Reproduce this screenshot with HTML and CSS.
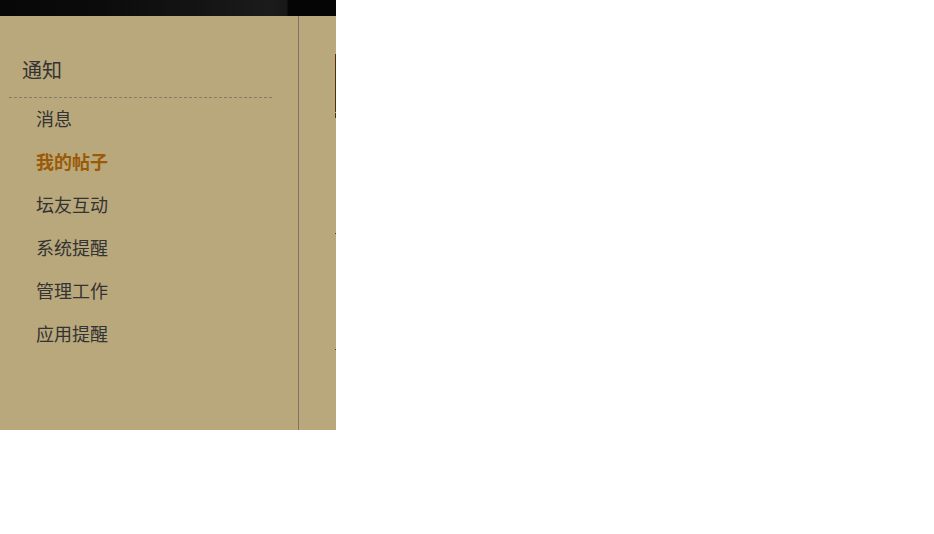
FILE: index.html
```html
<!DOCTYPE html>
<html lang="zh-CN">
<head>
<meta charset="utf-8">
<title>通知</title>
<link rel="stylesheet" href="styles.css">
</head>
<body>
<div class="page">
  <div class="topbar"></div>
  <div class="wrap">
    <aside class="sidebar">
      <h2 class="side-title">通知</h2>
      <ul class="side-menu">
        <li><a href="#">消息</a></li>
        <li class="active"><a href="#">我的帖子</a></li>
        <li><a href="#">坛友互动</a></li>
        <li><a href="#">系统提醒</a></li>
        <li><a href="#">管理工作</a></li>
        <li><a href="#">应用提醒</a></li>
      </ul>
    </aside>
    <main class="main">
      <div class="edge edge-a"></div>
      <div class="edge edge-b"></div>
      <div class="edge edge-dot edge-c"></div>
      <div class="edge edge-dot edge-d"></div>
    </main>
  </div>
</div>
</body>
</html>
```
FILE: styles.css
```css
html, body {
  margin: 0;
  padding: 0;
  background: #ffffff;
}
.page {
  width: 336px;
  font-family: "Noto Sans CJK SC", "Noto Sans", sans-serif;
}
.topbar {
  height: 16px;
  background: linear-gradient(90deg, #070707 0px, #0b0b0b 100px, #141414 200px, #1b1b1b 270px, #181818 287px, #050505 288px, #050505 336px);
}
.wrap {
  display: flex;
  height: 414px;
  background: #b9a87c;
}
.sidebar {
  width: 298px;
  border-right: 1px solid #7e7562;
  box-sizing: content-box;
}
.side-title {
  margin: 44px 0 0 9px;
  width: 250px;
  padding: 0 0 17px 13px;
  font-size: 20px;
  line-height: 20px;
  font-weight: normal;
  color: #333333;
  border-bottom: 1px dashed #857b63;
}
.side-menu {
  list-style: none;
  margin: -1px 0 0 0;
  padding: 0 0 0 36px;
}
.side-menu li {
  height: 43px;
  line-height: 43px;
  font-size: 18px;
}
.side-menu a {
  color: #333333;
  text-decoration: none;
}
.side-menu .active a {
  color: #9a5a06;
  font-weight: bold;
}
.main {
  flex: 1;
  display: flex;
  flex-direction: column;
  padding-left: 36px;
  overflow: hidden;
}
.edge {
  width: 1px;
  background: #5a2a0c;
}
.edge-a {
  margin-top: 38px;
  height: 58px;
}
.edge-b {
  margin-top: 1px;
  height: 5px;
}
.edge-dot {
  height: 1px;
  background: #4a3a28;
}
.edge-c {
  margin-top: 115px;
}
.edge-d {
  margin-top: 115px;
}
```
